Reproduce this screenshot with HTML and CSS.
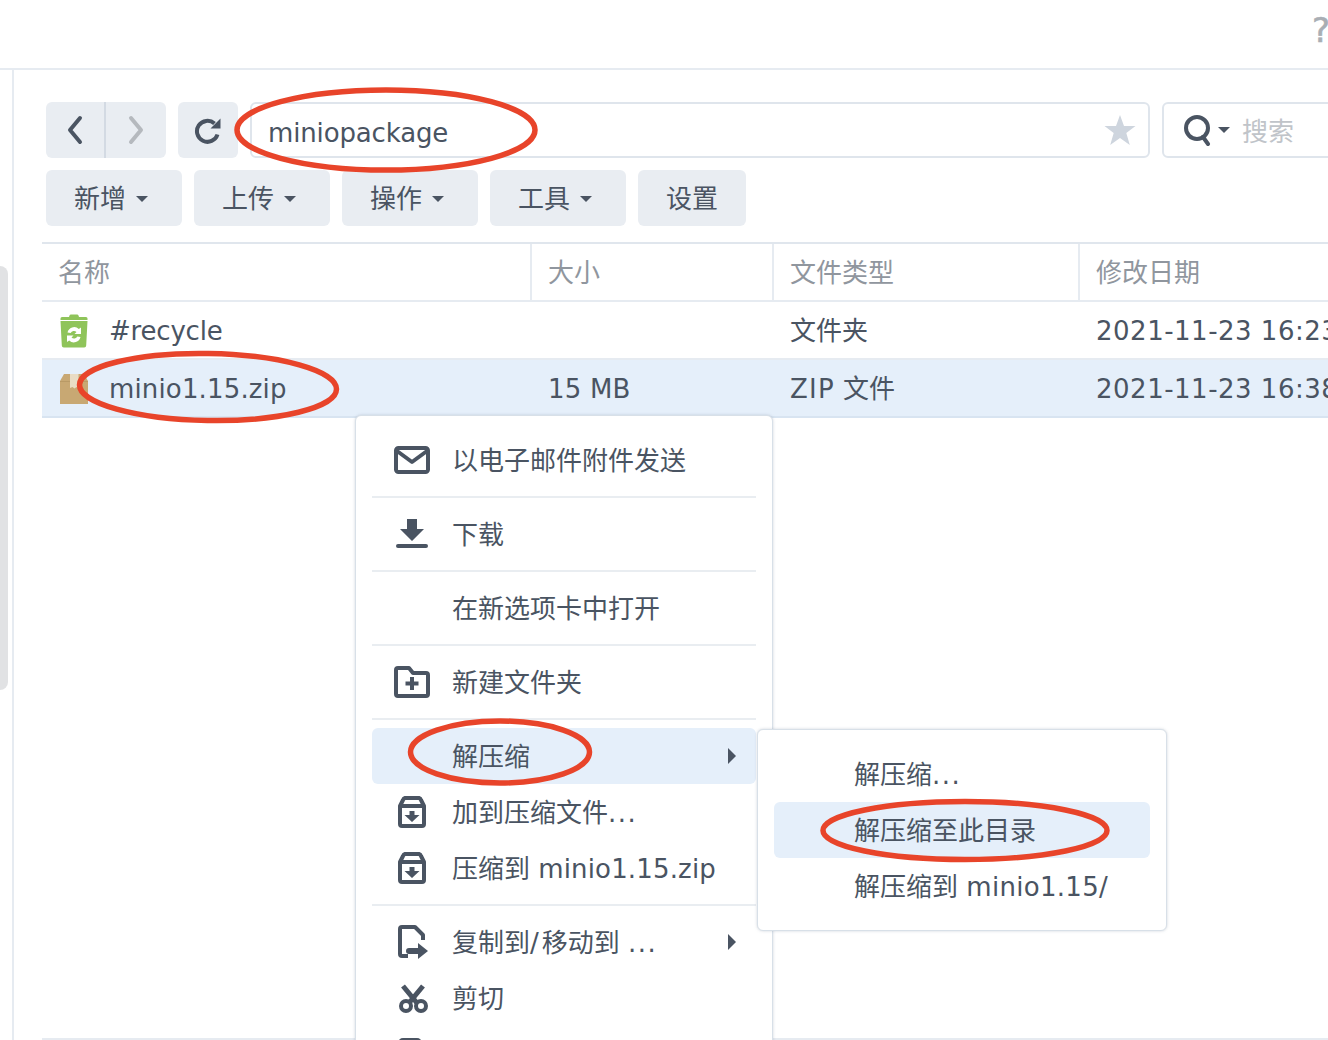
FILE: index.html
```html
<!DOCTYPE html>
<html lang="zh-CN">
<head>
<meta charset="utf-8">
<title>File Station</title>
<link rel="stylesheet" href="styles.css">
</head>
<body>
<div class="page">
  <header class="topbar"><span class="help">?</span></header>
  <div class="workspace">
    <aside class="sidebar"><div class="thumb"></div></aside>
    <main class="main">
      <div class="toolbar">
        <div class="btn nav-group">
          <span class="nav-btn nav-prev"><svg width="20" height="30" viewBox="0 0 20 30"><path d="M15 3 5 15l10 12" class="chev"/></svg></span>
          <span class="nav-btn nav-next"><svg width="20" height="30" viewBox="0 0 20 30"><path d="M5 3l10 12L5 27" class="chev chev-off"/></svg></span>
        </div>
        <div class="btn refresh"><svg width="28" height="28" viewBox="0 0 28 28"><path d="M20.500 7.500A10.500 10.500 0 1 0 23.500 18.500" class="ref"/><path d="M26.500 2.500v10H16.500z" class="fill"/></svg></div>
        <div class="pathbar"><span class="path-text">miniopackage</span>
          <svg class="star" width="32" height="32" viewBox="0 0 32 32"><path d="M16 1l4 11h11.500l-9.200 7 3.500 12L16 24l-9.800 7 3.500-12L.5 12H12z"/></svg>
        </div>
        <div class="search">
          <svg width="32" height="32" viewBox="0 0 32 32"><circle cx="15" cy="14" r="11" class="lens"/><path d="M21 23l5 7" class="lens"/></svg>
          <i class="caret caret-search"></i>
          <span class="search-text">搜索</span>
        </div>
      </div>
      <div class="toolbar actions">
        <div class="btn act">新增<i class="caret"></i></div>
        <div class="btn act">上传<i class="caret"></i></div>
        <div class="btn act">操作<i class="caret"></i></div>
        <div class="btn act">工具<i class="caret"></i></div>
        <div class="btn act act-plain">设置</div>
      </div>
      <section class="list">
        <div class="grid head">
          <div class="hcell">名称</div><div class="hcell">大小</div><div class="hcell">文件类型</div><div class="hcell">修改日期</div>
        </div>
        <div class="grid row">
          <div class="cell name">
            <svg class="ficon" width="28" height="34" viewBox="0 0 28 34"><path d="M9.500 1.500a1.500 1.500 0 0 1 1.500-1h6a1.500 1.500 0 0 1 1.500 1l.5 1.500H9z" fill="#8fc45a"/><path d="M2 3h24a1.500 1.500 0 0 1 1.500 1.500V6H.5V4.500A1.500 1.500 0 0 1 2 3z" fill="#8fc45a"/><path d="M.5 7h27l-1.300 24.500a2 2 0 0 1-2 1.900H3.800a2 2 0 0 1-2-1.900z" fill="#8fc45a"/><path d="M7.500 18.500a6.800 6.800 0 0 1 11.300-3.600l2.200-1.400v6.500h-6.500l2-2a3.800 3.800 0 0 0-5.900 1zM20.500 23a6.800 6.800 0 0 1-11.300 3.500L7 28v-6.500h6.500l-2 2a3.800 3.800 0 0 0 5.900-1z" fill="#fff"/></svg>
            <span class="recycle-name">#recycle</span>
          </div>
          <div class="cell"></div><div class="cell">文件夹</div><div class="cell date">2021-11-23 16:23</div>
        </div>
        <div class="grid row selected">
          <div class="cell name">
            <svg class="ficon" width="28" height="30" viewBox="0 0 28 30"><path d="M4 0h20l4 7v23H0V7z" fill="#c8a873"/><path d="M0 7h28v1H0z" fill="#b99a66"/><path d="M10 0h8.500v14l-2-1-2 1.500-2-1.500-2.500 1z" fill="#e9dcc4"/></svg>
            <span class="zip-name">minio1.15.zip</span>
          </div>
          <div class="cell size">15 MB</div><div class="cell"><span><span class="zip-type">ZIP</span> 文件</span></div><div class="cell date">2021-11-23 16:38</div>
        </div>
      </section>
    </main>
  </div>

  <nav class="menu main-menu">
    <div class="item"><svg class="micon" width="36" height="28" viewBox="0 0 36 28"><rect x="2" y="2" width="32" height="24" rx="2.500" class="ms"/><path d="M3 5l15 11L33 5" class="ms"/></svg>以电子邮件附件发送</div>
    <hr class="sep">
    <div class="item"><svg class="micon" width="32" height="30" viewBox="0 0 32 30"><path d="M11 0h10v10h7L16 22 4 10h7z" class="mf"/><rect y="25" width="32" height="4" rx="2" x="0" class="mf"/></svg>下载</div>
    <hr class="sep">
    <div class="item"><span class="micon"></span>在新选项卡中打开</div>
    <hr class="sep">
    <div class="item"><svg class="micon" width="36" height="32" viewBox="0 0 36 32"><path d="M2 4a2 2 0 0 1 2-2h11l4 5h13a2 2 0 0 1 2 2v19a2 2 0 0 1-2 2H4a2 2 0 0 1-2-2z" class="ms"/><path d="M18 11v13M11.500 17.500h13" class="ms"/></svg>新建文件夹</div>
    <hr class="sep">
    <div class="item active">
      <span class="micon"></span>解压缩<i class="arrow"></i>
      <div class="menu sub-menu">
        <div class="item sub-item"><span>解压缩<span class="dots">...</span></span></div>
        <div class="item sub-item active">解压缩至此目录</div>
        <div class="item sub-item"><span>解压缩到 <span class="latin-wide">minio1.15/</span></span></div>
      </div>
    </div>
    <div class="item"><svg class="micon" width="32" height="32" viewBox="0 0 32 32"><path d="M4 10l3-6a3 3 0 0 1 2-2h14a3 3 0 0 1 2 2l3 6v18a2 2 0 0 1-2 2H6a2 2 0 0 1-2-2z" class="ms"/><path d="M4 10h24" class="ms"/><path d="M13.500 15h5v4h5L16 26l-7.500-7h5z" class="mf"/></svg><span>加到压缩文件<span class="dots">...</span></span></div>
    <div class="item"><svg class="micon" width="32" height="32" viewBox="0 0 32 32"><path d="M4 10l3-6a3 3 0 0 1 2-2h14a3 3 0 0 1 2 2l3 6v18a2 2 0 0 1-2 2H6a2 2 0 0 1-2-2z" class="ms"/><path d="M4 10h24" class="ms"/><path d="M13.500 15h5v4h5L16 26l-7.500-7h5z" class="mf"/></svg><span>压缩到 <span class="zip-name">minio1.15.zip</span></span></div>
    <hr class="sep">
    <div class="item"><svg class="micon" width="32" height="34" viewBox="0 0 32 34"><path d="M12 31H6a2 2 0 0 1-2-2V4a2 2 0 0 1 2-2h13l8 8v5" class="ms"/><path d="M13 23h9v-5l10 8-10 8v-5h-9a3 3 0 0 1 0-6z" class="mf"/></svg><span>复制到<span class="slash">/</span>移动到 <span class="dots">...</span></span><i class="arrow"></i></div>
    <div class="item"><svg class="micon" width="32" height="30" viewBox="0 0 32 30"><path d="M7 3l14 17M27 3L13 20" class="ms ms-thick"/><circle cx="10" cy="23" r="5" class="ms"/><circle cx="25" cy="23" r="5" class="ms"/></svg>剪切</div>
    <div class="item"><svg class="micon" width="32" height="32" viewBox="0 0 32 32"><rect x="4" y="2" width="20" height="26" rx="3" class="ms"/></svg>复制</div>
  </nav>

  <svg class="marks" width="1328" height="1040" viewBox="0 0 1328 1040">
    <ellipse cx="386" cy="130" rx="149" ry="40" class="mark"/>
    <ellipse cx="208" cy="387" rx="128.500" ry="33.500" class="mark" transform="rotate(1 208 387)"/>
    <ellipse cx="500" cy="752" rx="89.500" ry="31" class="mark"/>
    <ellipse cx="965" cy="830.500" rx="142" ry="29" class="mark"/>
  </svg>
</div>
</body>
</html>
```

FILE: styles.css
```css
* { box-sizing: border-box; }
html, body { margin: 0; padding: 0; }
body {
  width: 1328px;
  height: 1040px;
  overflow: hidden;
  background: #fff;
  color: #4a5462;
  font-family: "DejaVu Sans", "Noto Sans CJK SC", sans-serif;
  font-size: 26px;
  line-height: 32px;
}
.page { position: relative; width: 1328px; height: 1040px; overflow: hidden; }

.topbar {
  height: 70px;
  border-bottom: 2px solid #e6ebf1;
  display: flex;
  justify-content: flex-end;
  align-items: flex-start;
}
.help {
  color: #a9aeb4;
  font-size: 34px;
  line-height: 34px;
  margin: 13px -2px 0 0;
  -webkit-text-stroke: 0.6px #a9aeb4;
}

.workspace { display: flex; height: 970px; }
.sidebar { width: 14px; border-right: 2px solid #e6ebf1; flex: none; }
.thumb {
  width: 8px;
  height: 424px;
  margin-top: 196px;
  background: #e1e2e4;
  border-radius: 0 8px 8px 0;
}
.main { flex: 1; min-width: 0; padding: 32px 0 0 32px; }

.toolbar { display: flex; gap: 12px; height: 56px; }
.actions { margin-top: 12px; }

.btn {
  background: #e9edf2;
  border-radius: 6px;
  display: flex;
  align-items: center;
  justify-content: center;
  flex: none;
}
.nav-group { width: 120px; }
.nav-btn { height: 56px; display: flex; align-items: center; justify-content: center; }
.nav-prev { width: 58px; }
.nav-next { width: 62px; border-left: 2px solid #d3dae3; }
.chev { fill: none; stroke: #4a5462; stroke-width: 4; stroke-linecap: round; stroke-linejoin: round; }
.chev-off { stroke: #b5b9be; }
.refresh { width: 60px; }
.ref { fill: none; stroke: #4a5462; stroke-width: 4; }
.fill { fill: #4a5462; }

.pathbar {
  width: 900px;
  flex: none;
  border: 2px solid #dfe5ec;
  border-radius: 6px;
  display: flex;
  align-items: center;
  justify-content: space-between;
  padding: 0 12px 0 16px;
}
.path-text { padding-top: 6px; letter-spacing: -0.15px; }
.star path { fill: #ced5de; }
.search {
  width: 200px;
  flex: none;
  border: 2px solid #dfe5ec;
  border-radius: 6px;
  display: flex;
  align-items: center;
  padding-left: 18px;
}
.lens { fill: none; stroke: #4a5462; stroke-width: 4; stroke-linecap: round; }
.search-text { color: #c0c4c9; margin-left: 12px; padding-top: 4px; }

.caret {
  display: inline-block;
  width: 0;
  height: 0;
  border-left: 6px solid transparent;
  border-right: 6px solid transparent;
  border-top: 6px solid #4a5462;
  margin-left: 10px;
}
.caret-search { margin-left: 4px; }
.act { width: 136px; padding: 2px 6px 0 0; }
.act-plain { width: 108px; padding-right: 0; }

.list {
  margin: 16px 0 0 -4px;
  height: 798px;
  border-top: 2px solid #e0e6ed;
  border-bottom: 2px solid #e6ebf1;
}
.grid { display: grid; grid-template-columns: 490px 242px 306px 1fr; }
.head { height: 58px; border-bottom: 2px solid #e6ebf1; color: #90969e; }
.hcell {
  border-right: 2px solid #e6ebf1;
  padding: 2px 0 0 16px;
  display: flex;
  align-items: center;
}
.hcell:last-child { border-right: 0; }
.row { height: 58px; border-bottom: 2px solid #e6ebf1; }
.selected { background: #e5effa; border-bottom-color: #d8e4f1; }
.cell {
  padding: 2px 0 0 16px;
  display: flex;
  align-items: center;
  white-space: nowrap;
}
.name { padding-left: 18px; }
.date { letter-spacing: 0.5px; }
.size { letter-spacing: 0.2px; }
.ficon { margin: 0 21px 0 0; flex: none; }
.recycle-name { letter-spacing: -0.2px; }
.zip-name { letter-spacing: 0.15px; }
.latin-wide { letter-spacing: 0.3px; }
.zip-type { letter-spacing: 1.2px; }
.dots { letter-spacing: 1.5px; }
.slash { letter-spacing: 3px; }

.menu {
  position: absolute;
  background: #fff;
  border: 1px solid #d8e0e8;
  border-radius: 6px;
  box-shadow: 0 0 3px rgba(120, 135, 155, 0.35);
  padding: 16px;
}
.main-menu { left: 355px; top: 415px; width: 418px; }
.sub-menu { left: 385px; top: 1px; width: 410px; }
.item {
  position: relative;
  height: 56px;
  padding-top: 2px;
  display: flex;
  align-items: center;
  border-radius: 6px;
  white-space: nowrap;
}
.sub-item { padding-left: 80px; }
.active { background: #e5effa; }
.micon { width: 36px; flex: none; margin: -2px 22px 0 22px; display: block; }
.ms { fill: none; stroke: #4a5462; stroke-width: 4; stroke-linejoin: round; }
.ms-thick { stroke-width: 5; }
.mf { fill: #4a5462; }
.arrow {
  position: absolute;
  right: 20px;
  top: 20px;
  border-top: 8px solid transparent;
  border-bottom: 8px solid transparent;
  border-left: 8px solid #4a5462;
}
.sep { border: 0; height: 2px; margin: 8px 0; background: #e9edf1; }

.marks { position: absolute; left: 0; top: 0; pointer-events: none; }
.mark { fill: none; stroke: #e8442a; stroke-width: 5.500; }
```
